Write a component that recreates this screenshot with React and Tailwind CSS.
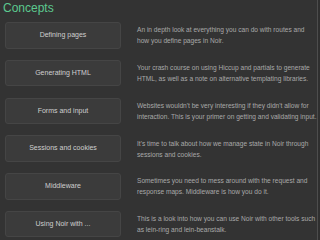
const concepts = [
  {
    title: "Defining pages",
    lines: [
      "An in depth look at everything you can do with routes and",
      "how you define pages in Noir.",
    ],
  },
  {
    title: "Generating HTML",
    lines: [
      "Your crash course on using Hiccup and partials to generate",
      "HTML, as well as a note on alternative templating libraries.",
    ],
  },
  {
    title: "Forms and input",
    lines: [
      "Websites wouldn't be very interesting if they didn't allow for",
      "interaction. This is your primer on getting and validating input.",
    ],
  },
  {
    title: "Sessions and cookies",
    lines: [
      "It's time to talk about how we manage state in Noir through",
      "sessions and cookies.",
    ],
  },
  {
    title: "Middleware",
    lines: [
      "Sometimes you need to mess around with the request and",
      "response maps. Middleware is how you do it.",
    ],
  },
  {
    title: "Using Noir with ...",
    lines: [
      "This is a look into how you can use Noir with other tools such",
      "as lein-ring and lein-beanstalk.",
    ],
  },
];

export default function App() {
  return (
    <div className="w-[320px] h-[240px] bg-[#2f2f2f] overflow-hidden font-['Liberation_Sans',Arial,sans-serif]">
      <div className="w-[318px] h-full bg-[#333333] border-r border-[#4d4d4d]">
        <h1 className="pl-[3px] pt-[1px] h-[22px] text-[12px] leading-[14px] text-[#5cc98f]">
          Concepts
        </h1>
        <div className="flex flex-col gap-[11.3px]">
          {concepts.map((c) => (
            <div key={c.title} className="flex items-center h-[26.5px]">
              <button className="ml-[5px] w-[116px] h-[26.5px] shrink-0 rounded-[3px] bg-[#3b3b3b] border border-[#454545] text-[7px] text-[#cfcfcf]">
                {c.title}
              </button>
              <p className="ml-[16px] whitespace-nowrap text-[6.6px] leading-[11px] text-[#a9a9a9]">
                {c.lines[0]}
                <br />
                {c.lines[1]}
              </p>
            </div>
          ))}
        </div>
      </div>
    </div>
  );
}
